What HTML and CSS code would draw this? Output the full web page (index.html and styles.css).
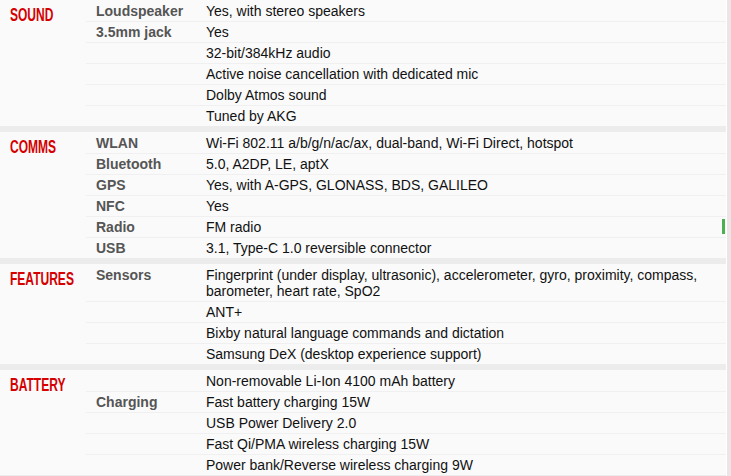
FILE: index.html
```html
<!DOCTYPE html>
<html>
<head>
<meta charset="utf-8">
<link rel="stylesheet" href="styles.css">
</head>
<body>
<div class="specs">
  <table class="section">
    <colgroup><col class="c-hd"><col class="c-ttl"><col></colgroup>
    <tr><th rowspan="6"><span class="hd">SOUND</span></th><td class="ttl">Loudspeaker</td><td class="nfo">Yes, with stereo speakers</td></tr>
    <tr><td class="ttl">3.5mm jack</td><td class="nfo">Yes</td></tr>
    <tr><td class="ttl"></td><td class="nfo">32-bit/384kHz audio</td></tr>
    <tr><td class="ttl"></td><td class="nfo">Active noise cancellation with dedicated mic</td></tr>
    <tr><td class="ttl"></td><td class="nfo">Dolby Atmos sound</td></tr>
    <tr><td class="ttl"></td><td class="nfo">Tuned by AKG</td></tr>
  </table>
  <table class="section">
    <colgroup><col class="c-hd"><col class="c-ttl"><col></colgroup>
    <tr><th rowspan="6"><span class="hd">COMMS</span></th><td class="ttl">WLAN</td><td class="nfo">Wi-Fi 802.11 a/b/g/n/ac/ax, dual-band, Wi-Fi Direct, hotspot</td></tr>
    <tr><td class="ttl">Bluetooth</td><td class="nfo">5.0, A2DP, LE, aptX</td></tr>
    <tr><td class="ttl">GPS</td><td class="nfo">Yes, with A-GPS, GLONASS, BDS, GALILEO</td></tr>
    <tr><td class="ttl">NFC</td><td class="nfo">Yes</td></tr>
    <tr><td class="ttl">Radio</td><td class="nfo">FM radio</td></tr>
    <tr><td class="ttl">USB</td><td class="nfo">3.1, Type-C 1.0 reversible connector</td></tr>
  </table>
  <table class="section">
    <colgroup><col class="c-hd"><col class="c-ttl"><col></colgroup>
    <tr><th rowspan="4"><span class="hd">FEATURES</span></th><td class="ttl">Sensors</td><td class="nfo">Fingerprint (under display, ultrasonic), accelerometer, gyro, proximity, compass, barometer, heart rate, SpO2</td></tr>
    <tr><td class="ttl"></td><td class="nfo">ANT+</td></tr>
    <tr><td class="ttl"></td><td class="nfo">Bixby natural language commands and dictation</td></tr>
    <tr><td class="ttl"></td><td class="nfo">Samsung DeX (desktop experience support)</td></tr>
  </table>
  <table class="section">
    <colgroup><col class="c-hd"><col class="c-ttl"><col></colgroup>
    <tr><th rowspan="5"><span class="hd">BATTERY</span></th><td class="ttl"></td><td class="nfo">Non-removable Li-Ion 4100 mAh battery</td></tr>
    <tr><td class="ttl">Charging</td><td class="nfo">Fast battery charging 15W</td></tr>
    <tr><td class="ttl"></td><td class="nfo">USB Power Delivery 2.0</td></tr>
    <tr><td class="ttl"></td><td class="nfo">Fast Qi/PMA wireless charging 15W</td></tr>
    <tr><td class="ttl"></td><td class="nfo">Power bank/Reverse wireless charging 9W</td></tr>
  </table>
  <div class="marker"></div>
</div>
</body>
</html>
```

FILE: styles.css
```css
html, body {
  margin: 0;
  padding: 0;
}
body {
  background: #ede5e5;
  font-family: "Liberation Sans", Arial, sans-serif;
  font-size: 14px;
  overflow: hidden;
}
.specs {
  position: relative;
  width: 727px;
  box-sizing: border-box;
  border-right: 1px solid #ffffff;
  background: #fafafa;
}
.section {
  width: 100%;
  table-layout: fixed;
  border-collapse: collapse;
  border-spacing: 0;
  border-bottom: 6px solid #ececec;
}
.c-hd { width: 86px; }
.c-ttl { width: 110px; }
th {
  vertical-align: top;
  text-align: left;
  padding: 5px 0 0 10px;
  font-weight: normal;
}
.hd {
  display: inline-block;
  font-family: "Liberation Sans", Arial, sans-serif;
  font-weight: bold;
  font-size: 18.5px;
  line-height: 18px;
  color: #d50000;
  transform: scaleX(0.65);
  transform-origin: left top;
  white-space: nowrap;
}
td {
  padding: 2px 10px;
  line-height: 16px;
  vertical-align: top;
  border-top: 1px solid #f0f0f0;
}
tr:first-child td {
  border-top-color: transparent;
}
.ttl {
  font-weight: bold;
  color: #555555;
  white-space: nowrap;
}
.nfo {
  color: #111111;
}
.marker {
  position: absolute;
  left: 722px;
  top: 219px;
  width: 3px;
  height: 15px;
  background: #4caf50;
}
```
